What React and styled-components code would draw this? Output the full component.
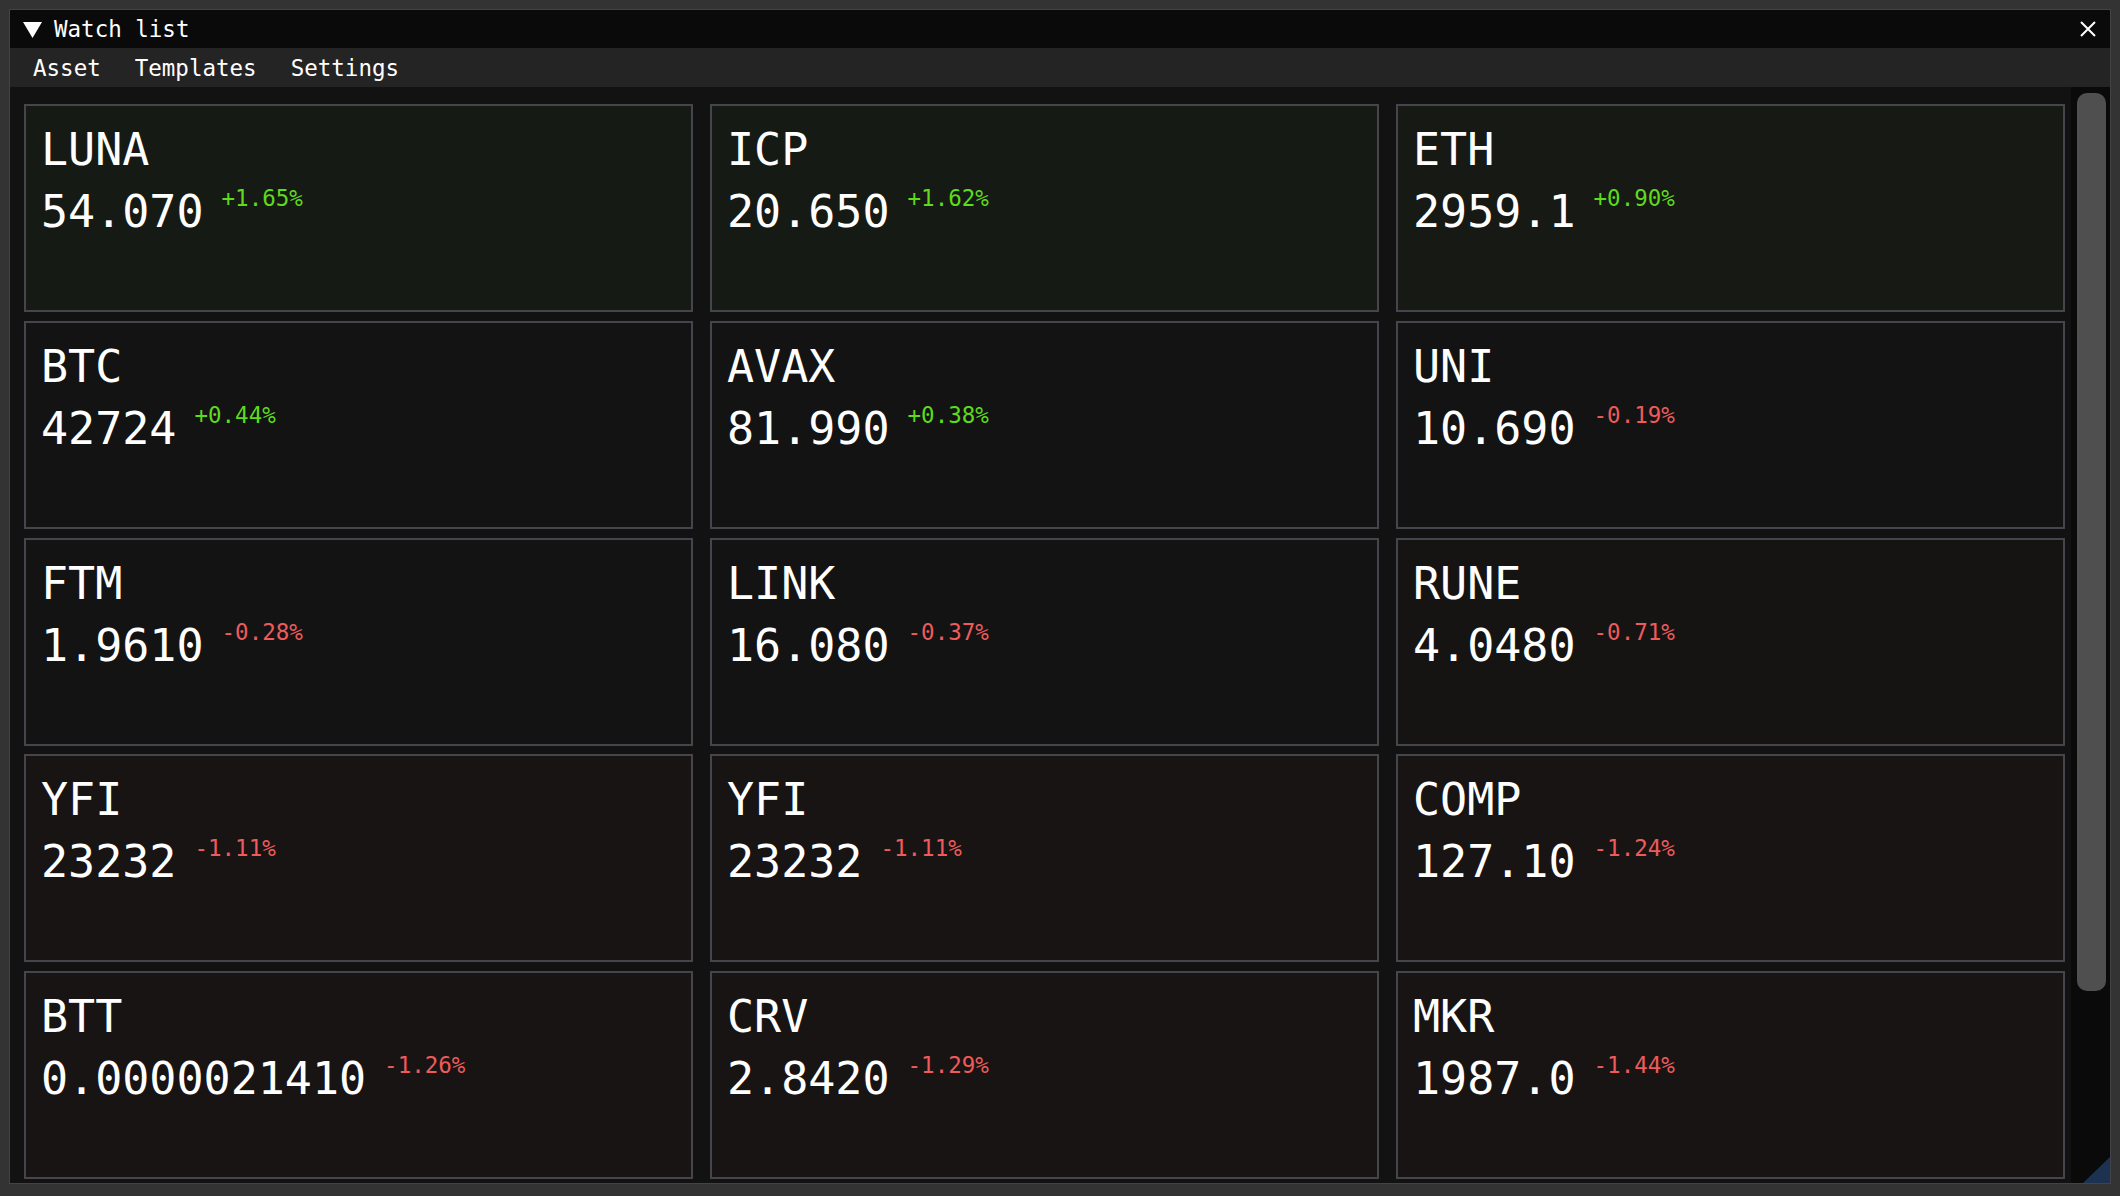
import React from 'react'
import styled, { createGlobalStyle } from 'styled-components'

const assets = [
  { sym: 'LUNA', price: '54.070', pct: 1.65 },
  { sym: 'ICP', price: '20.650', pct: 1.62 },
  { sym: 'ETH', price: '2959.1', pct: 0.9 },
  { sym: 'BTC', price: '42724', pct: 0.44 },
  { sym: 'AVAX', price: '81.990', pct: 0.38 },
  { sym: 'UNI', price: '10.690', pct: -0.19 },
  { sym: 'FTM', price: '1.9610', pct: -0.28 },
  { sym: 'LINK', price: '16.080', pct: -0.37 },
  { sym: 'RUNE', price: '4.0480', pct: -0.71 },
  { sym: 'YFI', price: '23232', pct: -1.11 },
  { sym: 'YFI', price: '23232', pct: -1.11 },
  { sym: 'COMP', price: '127.10', pct: -1.24 },
  { sym: 'BTT', price: '0.0000021410', pct: -1.26 },
  { sym: 'CRV', price: '2.8420', pct: -1.29 },
  { sym: 'MKR', price: '1987.0', pct: -1.44 },
]

// card background drifts toward green / red once the move is big enough
function tint(pct) {
  const t = Math.max(0, Math.min((Math.abs(pct) - 0.4) / 0.6, 1))
  if (pct >= 0) {
    return `rgb(${Math.round(19 + 3 * t)}, ${Math.round(19 + 7 * t)}, ${Math.round(19 + t)})`
  }
  return `rgb(${Math.round(19 + 5 * t)}, ${Math.round(19 + t)}, 19)`
}

function fmtPct(p) {
  return (p >= 0 ? '+' : '') + p.toFixed(2) + '%'
}

export default function App() {
  return (
    <>
      <GlobalStyle />
      <Page>
        <Window>
          <TitleBar>
            <Collapse viewBox="0 0 19 16">
              <polygon points="0,0 19,0 9.5,16" fill="#fff" />
            </Collapse>
            <Title>Watch list</Title>
            <Close viewBox="0 0 16 16">
              <path d="M1 1 L15 15 M15 1 L1 15" stroke="#fff" strokeWidth="2" />
            </Close>
          </TitleBar>
          <MenuBar>
            <MenuItem>Asset</MenuItem>
            <MenuItem>Templates</MenuItem>
            <MenuItem>Settings</MenuItem>
          </MenuBar>
          <Body>
            <Grid>
              {assets.map((a, i) => (
                <Card key={i} style={{ background: tint(a.pct) }}>
                  <Symbol>{a.sym}</Symbol>
                  <PriceRow>
                    <Price>{a.price}</Price>
                    <Change $up={a.pct >= 0}>{fmtPct(a.pct)}</Change>
                  </PriceRow>
                </Card>
              ))}
            </Grid>
            <Track>
              <Thumb />
            </Track>
          </Body>
          <Grip />
        </Window>
      </Page>
    </>
  )
}

const GlobalStyle = createGlobalStyle`
body {
  margin: 0;
  background: #333333;
  font-family: "DejaVu Sans Mono", "Liberation Mono", monospace;
  color: #ffffff;
}`

const Page = styled.div`
padding: 9px;`

const Window = styled.div`
position: relative;
width: 2100px;
height: 1173px;
border: 1px solid #424247;
background: #121212;
display: flex;
flex-direction: column;
overflow: hidden;`

const TitleBar = styled.div`
height: 38px;
flex: none;
background: #0a0a0a;
display: flex;
align-items: center;
padding: 0 14px 0 13px;
font-size: 22.5px;`

const Collapse = styled.svg`
width: 19px;
height: 16px;
margin-right: 12px;
margin-top: 1px;`

const Title = styled.span`
flex: 1;
line-height: 1;`

const Close = styled.svg`
width: 16px;
height: 16px;`

const MenuBar = styled.div`
height: 39px;
flex: none;
background: #242424;
display: flex;
align-items: center;
padding: 2px 0 0 6px;
box-sizing: border-box;
font-size: 22.5px;`

const MenuItem = styled.span`
padding: 0 17px;
line-height: 1;`

const Body = styled.div`
flex: 1;
min-height: 0;
display: flex;`

const Grid = styled.div`
flex: 1;
overflow: hidden;
padding: 17px 0 0 14px;
display: grid;
grid-template-columns: repeat(3, 669px);
grid-auto-rows: 208px;
column-gap: 17px;
row-gap: 8.75px;
align-content: start;`

const Card = styled.div`
border: 2px solid #46454b;
padding: 18px 15px;
display: flex;
flex-direction: column;`

const Symbol = styled.div`
font-size: 45px;
line-height: 52px;`

const PriceRow = styled.div`
display: flex;
align-items: flex-start;
margin-top: 10px;`

const Price = styled.span`
font-size: 45px;
line-height: 52px;`

const Change = styled.span`
font-size: 22.5px;
line-height: 24px;
margin-left: 18px;
color: ${(p) => (p.$up ? '#5ddb1c' : '#ef5b5b')};`

const Track = styled.div`
width: 29px;
flex: none;
background: #0a0a0a;
padding: 6px 4px 0 6px;`

const Thumb = styled.div`
height: 898px;
border-radius: 10px;
background: #4f4f4f;`

const Grip = styled.div`
position: absolute;
right: 0;
bottom: 0;
width: 27px;
height: 26px;
background: #1d3250;
clip-path: polygon(100% 0, 100% 100%, 0 100%);`
